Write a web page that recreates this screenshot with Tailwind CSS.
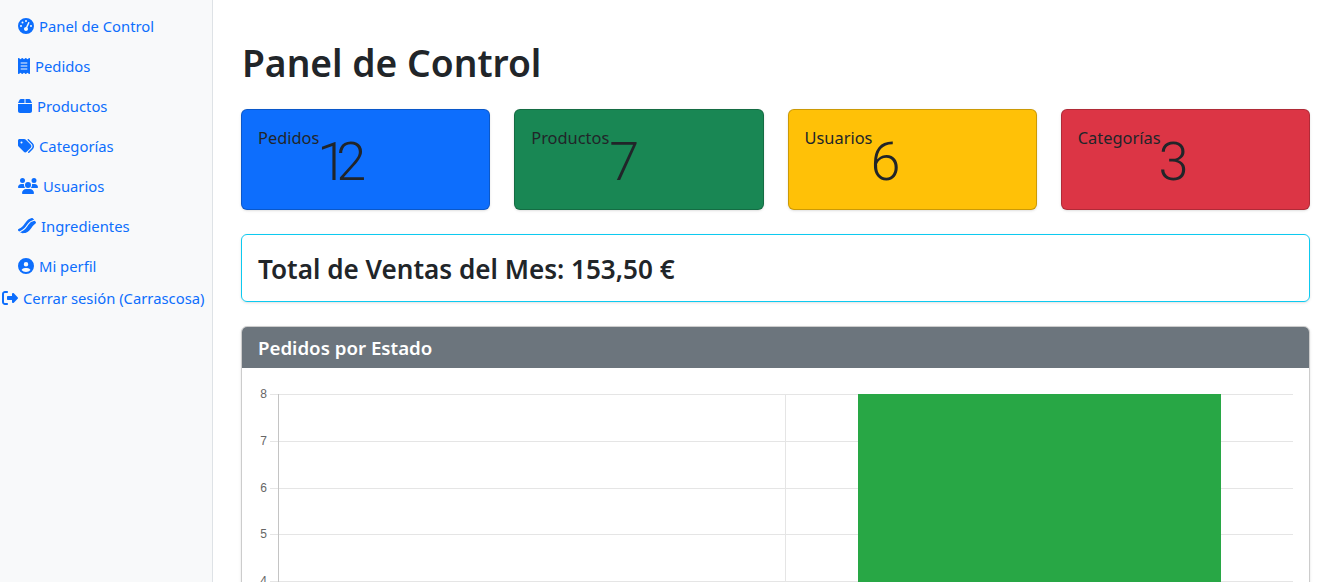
<!DOCTYPE html>
<html lang="es">
<head>
    <meta charset="UTF-8">
    <meta name="viewport" content="width=device-width, initial-scale=1.0">
    <title>Panel de Control</title>
    <script src="https://cdn.jsdelivr.net/npm/@tailwindcss/browser@4"></script>
</head>
<body class="bg-white text-[#212529] font-['Noto_Sans',sans-serif]">
    <div class="flex h-[582px] overflow-hidden">
        <!-- Sidebar -->
        <nav class="w-[213px] shrink-0 bg-[#f8f9fa] border-r border-[#dee2e6] pt-[6px] text-[14.8px] text-[#0d6efd]">
            <a href="#" class="flex items-center gap-[5px] h-10 pl-[18px]">
                <svg class="w-4 h-4 fill-[#0d6efd]" viewBox="0 0 512 512"><path d="M0 256a256 256 0 1 1 512 0A256 256 0 1 1 0 256zM288 96a32 32 0 1 0 -64 0 32 32 0 1 0 64 0zM256 416c35.3 0 64-28.7 64-64c0-17.4-6.9-33.1-18.1-44.6L366 161.7c5.3-12.1-.2-26.3-12.3-31.6s-26.3 .2-31.6 12.3L257.9 288c-.6 0-1.3 0-1.9 0c-35.3 0-64 28.7-64 64s28.7 64 64 64zM176 144a32 32 0 1 0 -64 0 32 32 0 1 0 64 0zM96 288a32 32 0 1 0 0-64 32 32 0 1 0 0 64zm352-32a32 32 0 1 0 -64 0 32 32 0 1 0 64 0z"/></svg>
                Panel de Control
            </a>
            <a href="#" class="flex items-center gap-[5px] h-10 pl-[18px]">
                <svg class="w-3 h-4 fill-[#0d6efd]" viewBox="0 0 384 512"><path d="M14 2.2C22.5-1.7 32.5-.3 39.6 5.8L80 40.4 120.4 5.8c9-7.7 22.3-7.7 31.2 0L192 40.4 232.4 5.8c9-7.7 22.2-7.7 31.2 0L304 40.4 344.4 5.8c7.1-6.1 17.1-7.5 25.6-3.6s14 12.4 14 21.8V488c0 9.4-5.5 17.9-14 21.8s-18.5 2.5-25.6-3.6L304 471.6l-40.4 34.6c-9 7.7-22.3 7.7-31.2 0L192 471.6l-40.4 34.6c-9 7.7-22.2 7.7-31.2 0L80 471.6 39.6 506.2c-7.1 6.1-17.1 7.5-25.6 3.6S0 497.4 0 488V24C0 14.6 5.5 6.1 14 2.2zM96 144c-8.8 0-16 7.2-16 16s7.2 16 16 16H288c8.8 0 16-7.2 16-16s-7.2-16-16-16H96zM80 352c0 8.8 7.2 16 16 16H288c8.8 0 16-7.2 16-16s-7.2-16-16-16H96c-8.8 0-16 7.2-16 16zM96 240c-8.8 0-16 7.2-16 16s7.2 16 16 16H288c8.8 0 16-7.2 16-16s-7.2-16-16-16H96z"/></svg>
                Pedidos
            </a>
            <a href="#" class="flex items-center gap-[5px] h-10 pl-[18px]">
                <svg class="w-[14px] h-4 fill-[#0d6efd]" viewBox="0 0 448 512"><path d="M50.7 58.5L0 160H208V32H93.7C75.5 32 58.9 42.3 50.7 58.5zM240 160H448L397.3 58.5C389.1 42.3 372.5 32 354.3 32H240V160zm208 32H0V416c0 35.3 28.7 64 64 64H384c35.3 0 64-28.7 64-64V192z"/></svg>
                Productos
            </a>
            <a href="#" class="flex items-center gap-[5px] h-10 pl-[18px]">
                <svg class="w-4 h-4 fill-[#0d6efd]" viewBox="0 0 512 512"><path d="M345 39.1L472.8 168.4c52.4 53 52.4 138.2 0 191.2L360.8 472.9c-9.3 9.4-24.5 9.5-33.9 .2s-9.5-24.5-.2-33.9L438.6 325.9c33.9-34.3 33.9-89.4 0-123.7L310.9 72.9c-9.3-9.4-9.2-24.6 .2-33.9s24.6-9.2 33.9 .2zM0 229.5V80C0 53.5 21.5 32 48 32H197.5c17 0 33.3 6.7 45.3 18.7l168 168c25 25 25 65.5 0 90.5L277.3 442.7c-25 25-65.5 25-90.5 0l-168-168C6.7 262.7 0 246.5 0 229.5zM144 144a32 32 0 1 0 -64 0 32 32 0 1 0 64 0z"/></svg>
                Categorías
            </a>
            <a href="#" class="flex items-center gap-[5px] h-10 pl-[18px]">
                <svg class="w-5 h-4 fill-[#0d6efd]" viewBox="0 0 640 512"><path d="M144 0a80 80 0 1 1 0 160A80 80 0 1 1 144 0zM512 0a80 80 0 1 1 0 160A80 80 0 1 1 512 0zM0 298.7C0 239.8 47.8 192 106.7 192h42.7c15.9 0 31 3.5 44.6 9.7c-1.3 7.2-1.9 14.7-1.9 22.3c0 38.2 16.8 72.5 43.3 96c-.2 0-.4 0-.7 0H21.3C9.6 320 0 310.4 0 298.7zM405.3 320c-.2 0-.4 0-.7 0c26.6-23.5 43.3-57.8 43.3-96c0-7.6-.7-15-1.9-22.3c13.6-6.3 28.7-9.7 44.6-9.7h42.7C592.2 192 640 239.8 640 298.7c0 11.8-9.6 21.3-21.3 21.3H405.3zM224 224a96 96 0 1 1 192 0 96 96 0 1 1 -192 0zM128 485.3C128 411.7 187.7 352 261.3 352H378.7C452.3 352 512 411.7 512 485.3c0 14.7-11.9 26.7-26.7 26.7H154.7c-14.7 0-26.7-11.9-26.7-26.7z"/></svg>
                Usuarios
            </a>
            <a href="#" class="flex items-center gap-[5px] h-10 pl-[18px]">
                <svg class="w-[18px] h-4 fill-[#0d6efd]" viewBox="0 0 576 512"><path d="M439.2 1.2c11.2-3.2 23.2-.1 31.4 8.1L518 56.7l-26.5 7.9c-58 16.6-98.1 39.6-129.6 67.4c-31.2 27.5-53.2 59.1-75.1 90.9l-2.3 3.3C241.9 288.3 195 356.4 72.8 417.7L37.9 435.2 9.4 406.6c-7.3-7.3-10.6-17.6-9-27.8s8.1-18.9 17.3-23.5C136.1 296.2 180.9 231 223.3 169.3l2.3-3.4c21.8-31.8 44.9-64.9 77.7-93.9c33.4-29.5 75.8-53.6 135.9-70.8zM61.8 459l25.4-12.7c129.5-64.9 179.9-138.1 223.8-201.8l2.2-3.2c22.1-32 41.5-59.6 69.3-84.1c27.7-24.5 64.2-45.2 118.3-60.7l28.7-8.4 35.7 35.7c7 7 10.4 16.9 9.4 26.7s-6.5 18.6-14.7 24c-41.6 27.1-74.5 59.6-99.6 94.6c-21.2 29.5-40.5 62.7-63.8 92.9c-24.4 31.6-53.4 62.4-93 85.7c-39.8 23.4-89.3 38.5-153.7 38.7c-8.5 0-16.6-3.4-22.6-9.4L61.8 459z"/></svg>
                Ingredientes
            </a>
            <a href="#" class="flex items-center gap-[5px] h-10 pl-[18px]">
                <svg class="w-4 h-4 fill-[#0d6efd]" viewBox="0 0 512 512"><path d="M399 384.2C376.9 345.8 335.4 320 288 320H224c-47.4 0-88.9 25.8-111 64.2c35.2 39.2 86.2 63.8 143 63.8s107.8-24.7 143-63.8zM0 256a256 256 0 1 1 512 0A256 256 0 1 1 0 256zm256 16a72 72 0 1 0 0-144 72 72 0 1 0 0 144z"/></svg>
                Mi perfil
            </a>
            <a href="#" class="flex items-center gap-[5px] h-6 pl-[2px] whitespace-nowrap">
                <svg class="w-4 h-4 fill-[#0d6efd]" viewBox="0 0 512 512"><path d="M377.9 105.9L500.7 228.7c7.2 7.2 11.3 17.1 11.3 27.3s-4.1 20.1-11.3 27.3L377.9 406.1c-6.4 6.4-15 9.9-24 9.9c-18.7 0-33.9-15.2-33.9-33.9l0-62.1-128 0c-17.7 0-32-14.3-32-32l0-64c0-17.7 14.3-32 32-32l128 0 0-62.1c0-18.7 15.2-33.9 33.9-33.9c9 0 17.6 3.6 24 9.9zM160 96L96 96c-17.7 0-32 14.3-32 32l0 256c0 17.7 14.3 32 32 32l64 0c17.7 0 32 14.3 32 32s-14.3 32-32 32l-64 0c-53 0-96-43-96-96L0 128C0 75 43 32 96 32l64 0c17.7 0 32 14.3 32 32s-14.3 32-32 32z"/></svg>
                Cerrar sesión (Carrascosa)
            </a>
        </nav>

        <!-- Main -->
        <main class="flex-1 pl-[28px] pr-[25px] pt-[39px]">
            <h1 class="text-[37.2px] leading-[48px] font-semibold ml-px mb-[22px]">Panel de Control</h1>

            <div class="grid grid-cols-4 gap-6 mb-6">
                <div class="h-[101px] flex items-start pl-4 pt-[15px] bg-[#0d6efd] border border-black/20 rounded-md shadow-sm">
                    <span class="text-[16.4px] leading-[26px]">Pedidos</span>
                    <span class="text-[54px] leading-[70px] font-light tracking-[-11px] -ml-[2px] mt-[2px] font-['Roboto',sans-serif]">12</span>
                </div>
                <div class="h-[101px] flex items-start pl-4 pt-[15px] bg-[#198754] border border-black/20 rounded-md shadow-sm">
                    <span class="text-[16.4px] leading-[26px]">Productos</span>
                    <span class="text-[54px] leading-[70px] font-light mt-[2px] font-['Roboto',sans-serif]">7</span>
                </div>
                <div class="h-[101px] flex items-start pl-4 pt-[15px] bg-[#ffc107] border border-black/20 rounded-md shadow-sm">
                    <span class="text-[16.4px] leading-[26px]">Usuarios</span>
                    <span class="text-[54px] leading-[70px] font-light -ml-[2px] mt-[2px] font-['Roboto',sans-serif]">6</span>
                </div>
                <div class="h-[101px] flex items-start pl-4 pt-[15px] bg-[#dc3545] border border-black/20 rounded-md shadow-sm">
                    <span class="text-[16.4px] leading-[26px]">Categorías</span>
                    <span class="text-[54px] leading-[70px] font-light -ml-[2px] mt-[2px] font-['Roboto',sans-serif]">3</span>
                </div>
            </div>

            <div class="h-[68px] flex items-center pl-[16px] pt-[3px] border border-[#0dcaf0] rounded-md shadow-sm mb-6">
                <h3 class="text-[26.1px] font-semibold">Total de Ventas del Mes: 153,50 €</h3>
            </div>

            <div class="border border-black/20 rounded-md shadow-sm overflow-hidden">
                <div class="h-[41px] flex items-center pl-[16px] pt-px bg-[#6c757d] text-white text-[18.7px] font-semibold">Pedidos por Estado</div>
                <svg class="block w-full h-[260px]" viewBox="0 0 1067 260" font-family="Liberation Sans, sans-serif" font-size="12" fill="#666">
                    <g stroke="#e5e5e5" stroke-width="1">
                        <line x1="28" x2="1051" y1="26.5" y2="26.5"/>
                        <line x1="28" x2="1051" y1="73.5" y2="73.5"/>
                        <line x1="28" x2="1051" y1="120.5" y2="120.5"/>
                        <line x1="28" x2="1051" y1="166.5" y2="166.5"/>
                        <line x1="28" x2="1051" y1="213.5" y2="213.5"/>
                        <line x1="543.5" x2="543.5" y1="26" y2="260"/>
                    </g>
                    <line x1="36.5" x2="36.5" y1="26" y2="260" stroke="#c4c4c4"/>
                    <rect x="616" y="26" width="363" height="234" fill="#28a745"/>
                    <text x="25" y="30" text-anchor="end">8</text>
                    <text x="25" y="77" text-anchor="end">7</text>
                    <text x="25" y="124" text-anchor="end">6</text>
                    <text x="25" y="170" text-anchor="end">5</text>
                    <text x="25" y="217" text-anchor="end">4</text>
                </svg>
            </div>
        </main>
    </div>
</body>
</html>
